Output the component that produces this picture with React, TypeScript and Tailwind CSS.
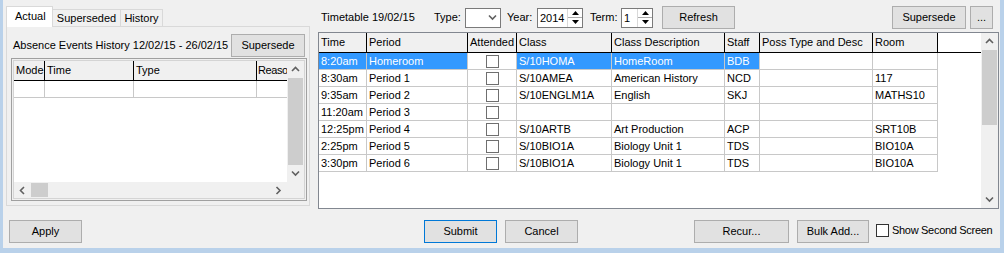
import React from 'react';

type Row = {
  time: string;
  period: string;
  cls: string;
  desc: string;
  staff: string;
  poss: string;
  room: string;
};

const rows: Row[] = [
  { time: '8:20am', period: 'Homeroom', cls: 'S/10HOMA', desc: 'HomeRoom', staff: 'BDB', poss: '', room: '' },
  { time: '8:30am', period: 'Period 1', cls: 'S/10AMEA', desc: 'American History', staff: 'NCD', poss: '', room: '117' },
  { time: '9:35am', period: 'Period 2', cls: 'S/10ENGLM1A', desc: 'English', staff: 'SKJ', poss: '', room: 'MATHS10' },
  { time: '11:20am', period: 'Period 3', cls: '', desc: '', staff: '', poss: '', room: '' },
  { time: '12:25pm', period: 'Period 4', cls: 'S/10ARTB', desc: 'Art Production', staff: 'ACP', poss: '', room: 'SRT10B' },
  { time: '2:25pm', period: 'Period 5', cls: 'S/10BIO1A', desc: 'Biology Unit 1', staff: 'TDS', poss: '', room: 'BIO10A' },
  { time: '3:30pm', period: 'Period 6', cls: 'S/10BIO1A', desc: 'Biology Unit 1', staff: 'TDS', poss: '', room: 'BIO10A' },
];

const Chevron = ({ dir }: { dir: 'up' | 'down' | 'left' | 'right' }) => {
  const pts = {
    up: '1,5 4.5,1.5 8,5',
    down: '1,1.5 4.5,5 8,1.5',
    left: '5,1 1.5,4.5 5,8',
    right: '1.5,1 5,4.5 1.5,8',
  }[dir];
  const size = dir === 'up' || dir === 'down' ? { w: 9, h: 7 } : { w: 7, h: 9 };
  return (
    <svg width={size.w} height={size.h} viewBox={`0 0 ${size.w} ${size.h}`}>
      <polyline points={pts} fill="none" stroke="#606060" strokeWidth="1.6" />
    </svg>
  );
};

const Tri = ({ up }: { up?: boolean }) => (
  <svg width="7" height="4" viewBox="0 0 7 4">
    <polygon points={up ? '0,4 3.5,0 7,4' : '0,0 7,0 3.5,4'} fill="#000" />
  </svg>
);

const Btn = ({ label, w, primary }: { label: string; w: string; primary?: boolean }) => (
  <button
    className={`${w} h-[23px] shrink-0 border ${primary ? 'border-[#0078d7]' : 'border-[#adadad]'} bg-[#e1e1e1] text-[11px] text-black`}
  >
    {label}
  </button>
);

const Check = () => <div className="w-[13px] h-[13px] border border-[#333] bg-white opacity-70" />;

const Spinner = ({ value, w }: { value: string; w: string }) => (
  <div className={`${w} h-[20px] flex border border-[#7a7a7a] bg-white`}>
    <div className="flex-1 pl-[2px] text-[11px] leading-[18px]">{value}</div>
    <div className="w-[15px] flex flex-col border-l border-[#d9d9d9]">
      <div className="flex-1 flex items-center justify-center border-b border-[#adadad]">
        <Tri up />
      </div>
      <div className="flex-1 flex items-center justify-center">
        <Tri />
      </div>
    </div>
  </div>
);

const head = 'h-[19px] shrink-0 border-r border-black px-[2px] text-[11px] leading-[19px] whitespace-nowrap overflow-hidden';
const cell = 'h-[17px] shrink-0 border-r border-b border-[#c8c8c8] px-[2px] text-[11px] leading-[17px] whitespace-nowrap overflow-hidden';

export default function App() {
  return (
    <div className="w-[1004px] h-[253px] bg-[#b9d1ea] pl-[3px] pr-[4px] pb-[5px] font-['Liberation_Sans',Arial,sans-serif] text-black">
      <div className="h-full bg-[#f0f0f0] flex flex-col">
        <div className="flex h-[210px]">
          {/* left tab control */}
          <div className="ml-[3px] mt-[6px] w-[304px] flex flex-col">
            <div className="flex items-end h-[20px]">
              <div className="relative z-10 -mb-px h-[21px] w-[47px] border border-b-0 border-[#d9d9d9] bg-white pl-[8px] text-[11px] leading-[18px]">
                Actual
              </div>
              <div className="h-[17px] w-[68px] border border-b-0 border-l-0 border-[#d9d9d9] bg-[#f0f0f0] text-center text-[11px] leading-[17px]">
                Superseded
              </div>
              <div className="h-[17px] w-[42px] border border-b-0 border-l-0 border-[#d9d9d9] bg-[#f0f0f0] text-center text-[11px] leading-[17px]">
                History
              </div>
            </div>
            <div className="h-[180px] border border-[#d9d9d9] flex flex-col">
              <div className="flex items-center h-[24px] mt-[6px] pl-[6px] pr-[4px]">
                <span className="flex-1 text-[11px] whitespace-nowrap">Absence Events History 12/02/15 - 26/02/15</span>
                <Btn label="Supersede" w="w-[74px]" />
              </div>
              <div className="mt-[1px] ml-[4px] mr-[2px] h-[143px] border border-[#a0a0a0] p-px">
                <div className="h-full border border-[#d4d4d4] flex flex-col">
                  <div className="flex flex-1 min-h-0">
                    <div className="flex-1 bg-white flex flex-col overflow-hidden">
                      <div className="flex bg-[#f0f0f0] border-b border-black">
                        <div className={`${head} w-[31px]`}>Mode</div>
                        <div className={`${head} w-[89px]`}>Time</div>
                        <div className={`${head} w-[123px]`}>Type</div>
                        <div className="h-[19px] flex-1 pl-[1px] text-[11px] leading-[19px] tracking-[-0.4px] whitespace-nowrap">Reaso</div>
                      </div>
                      <div className="flex">
                        <div className={`${cell} w-[31px]`} />
                        <div className={`${cell} w-[89px]`} />
                        <div className={`${cell} w-[123px]`} />
                        <div className="h-[17px] flex-1 border-b border-[#c8c8c8]" />
                      </div>
                    </div>
                    <div className="w-[17px] bg-[#f0f0f0] flex flex-col">
                      <div className="h-[17px] flex items-center justify-center"><Chevron dir="up" /></div>
                      <div className="h-[89px] mx-[1px] bg-[#cdcdcd]" />
                      <div className="flex-1" />
                      <div className="h-[17px] flex items-center justify-center"><Chevron dir="down" /></div>
                    </div>
                  </div>
                  <div className="h-[16px] flex bg-[#f0f0f0]">
                    <div className="w-[17px] flex items-center justify-center"><Chevron dir="left" /></div>
                    <div className="w-[17px] my-[1px] bg-[#cdcdcd]" />
                    <div className="flex-1" />
                    <div className="w-[17px] flex items-center justify-center"><Chevron dir="right" /></div>
                    <div className="w-[17px]" />
                  </div>
                </div>
              </div>
            </div>
          </div>

          {/* right timetable */}
          <div className="ml-[8px] flex-1 flex flex-col">
            <div className="mt-[6px] h-[23px] flex items-center text-[11px]">
              <span className="w-[116px] pl-[3px] whitespace-nowrap">Timetable 19/02/15</span>
              <span className="w-[31px]">Type:</span>
              <div className="w-[36px] h-[20px] border border-[#7a7a7a] bg-white flex items-center justify-end pr-[3px]">
                <Chevron dir="down" />
              </div>
              <span className="ml-[6px] w-[30px]">Year:</span>
              <Spinner value="2014" w="w-[46px]" />
              <span className="ml-[7px] w-[31px]">Term:</span>
              <Spinner value="1" w="w-[32px]" />
              <div className="ml-[9px]"><Btn label="Refresh" w="w-[73px]" /></div>
              <div className="flex-1" />
              <Btn label="Supersede" w="w-[74px]" />
              <div className="ml-[4px] mr-[7px]"><Btn label="..." w="w-[23px]" /></div>
            </div>
            <div className="mt-[3px] mr-[1px] h-[177px] border border-[#828790] bg-white flex">
              <div className="flex-1 flex flex-col overflow-hidden">
                <div className="flex bg-[#f0f0f0] border-b border-black">
                  <div className={`${head} w-[48px]`}>Time</div>
                  <div className={`${head} w-[101px]`}>Period</div>
                  <div className={`${head} w-[49px]`}>Attended</div>
                  <div className={`${head} w-[95px]`}>Class</div>
                  <div className={`${head} w-[113px]`}>Class Description</div>
                  <div className={`${head} w-[35px]`}>Staff</div>
                  <div className={`${head} w-[113px]`}>Poss Type and Desc</div>
                  <div className={`${head} w-[65px]`}>Room</div>
                  <div className="flex-1 bg-white" />
                </div>
                {rows.map((r, i) => {
                  const sel = i === 0 ? 'bg-[#3399ff] text-white' : '';
                  return (
                    <div key={i} className="flex">
                      <div className={`${cell} w-[48px] ${sel}`}>{r.time}</div>
                      <div className={`${cell} w-[101px] ${sel}`}>{r.period}</div>
                      <div className={`${cell} w-[49px] flex items-center justify-center`}>
                        <Check />
                      </div>
                      <div className={`${cell} w-[95px] ${sel}`}>{r.cls}</div>
                      <div className={`${cell} w-[113px] ${sel}`}>{r.desc}</div>
                      <div className={`${cell} w-[35px] ${sel}`}>{r.staff}</div>
                      <div className={`${cell} w-[113px]`}>{r.poss}</div>
                      <div className={`${cell} w-[65px]`}>{r.room}</div>
                    </div>
                  );
                })}
              </div>
              <div className="w-[17px] bg-[#f0f0f0] flex flex-col">
                <div className="h-[17px] flex items-center justify-center"><Chevron dir="up" /></div>
                <div className="h-[75px] mx-[1px] bg-[#cdcdcd]" />
                <div className="flex-1" />
                <div className="h-[17px] flex items-center justify-center"><Chevron dir="down" /></div>
              </div>
            </div>
          </div>
        </div>

        {/* bottom buttons */}
        <div className="mt-[8px] flex items-center">
          <div className="ml-[6px]"><Btn label="Apply" w="w-[73px]" /></div>
          <div className="ml-[342px]"><Btn label="Submit" w="w-[73px]" primary /></div>
          <div className="ml-[8px]"><Btn label="Cancel" w="w-[73px]" /></div>
          <div className="ml-[116px]"><Btn label="Recur..." w="w-[95px]" /></div>
          <div className="ml-[8px]"><Btn label="Bulk Add..." w="w-[72px]" /></div>
          <div className="ml-[7px] w-[13px] h-[13px] border border-[#333] bg-white" />
          <span className="ml-[3px] text-[11px] tracking-[-0.3px] whitespace-nowrap">Show Second Screen</span>
        </div>
      </div>
    </div>
  );
}
